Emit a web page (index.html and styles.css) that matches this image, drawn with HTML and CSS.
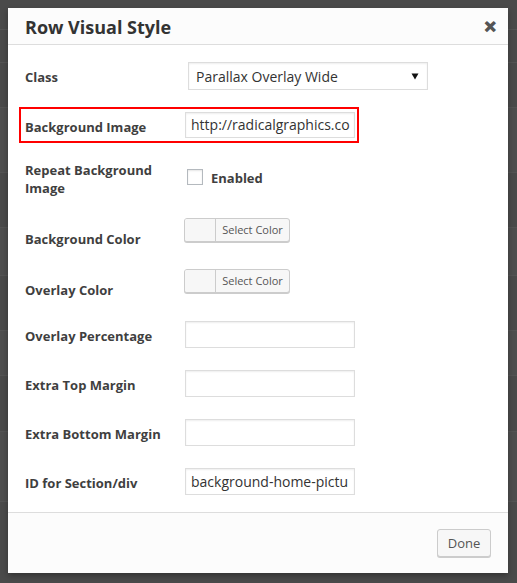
FILE: index.html
```html
<!DOCTYPE html>
<html>
<head>
<meta charset="utf-8">
<title>Row Visual Style</title>
<link rel="stylesheet" href="styles.css">
</head>
<body>
<div class="backdrop">
  <div class="bd-row h30"></div>
  <div class="bd-row h33"></div>
  <div class="bd-row h45"></div>
  <div class="bd-row h65 band"></div>
  <div class="bd-row h55"></div>
  <div class="bd-row h48 band"></div>
  <div class="bd-row h55"></div>
  <div class="bd-row h45 band"></div>
  <div class="bd-row h56"></div>
  <div class="bd-row h70 band"></div>
</div>

<div class="modal">
  <div class="modal-head">
    <h1 class="modal-title">Row Visual Style</h1>
    <span class="close">✕</span>
  </div>
  <div class="modal-body">
    <div class="row row-class">
      <div class="label">Class</div>
      <div class="select">
        <span>Parallax Overlay Wide</span>
        <svg class="caret" width="8" height="7" viewBox="0 0 8 7"><path d="M0.5 0.5h7L4 6.5z" fill="#111"/></svg>
      </div>
    </div>
    <div class="row row-image">
      <div class="label">Background Image</div>
      <div class="input">http://radicalgraphics.co</div>
    </div>
    <div class="row row-repeat">
      <div class="label">Repeat Background<br>Image</div>
      <div class="check-wrap">
        <span class="checkbox"></span>
        <span class="check-label">Enabled</span>
      </div>
    </div>
    <div class="row row-color">
      <div class="label">Background Color</div>
      <div class="color-btn"><span class="swatch"></span><span class="color-text">Select Color</span></div>
    </div>
    <div class="row row-color">
      <div class="label">Overlay Color</div>
      <div class="color-btn"><span class="swatch"></span><span class="color-text">Select Color</span></div>
    </div>
    <div class="row row-text">
      <div class="label">Overlay Percentage</div>
      <div class="input"></div>
    </div>
    <div class="row row-text">
      <div class="label">Extra Top Margin</div>
      <div class="input"></div>
    </div>
    <div class="row row-text">
      <div class="label">Extra Bottom Margin</div>
      <div class="input"></div>
    </div>
    <div class="row row-text">
      <div class="label">ID for Section/div</div>
      <div class="input">background-home-pictu</div>
    </div>
  </div>
  <div class="modal-foot">
    <button class="done">Done</button>
  </div>
</div>
</body>
</html>
```
FILE: styles.css
```css
* { box-sizing: border-box; }
html, body { margin: 0; padding: 0; }
body {
  width: 517px;
  height: 583px;
  overflow: hidden;
  background: #4a4a4a;
  font-family: "Open Sans", "Noto Sans", sans-serif;
  position: relative;
}

.backdrop { display: flex; flex-direction: column; }
.bd-row { border-bottom: 1px solid #545454; }
.bd-row.band { background: #4e4e4e; }
.h30 { height: 30px; }
.h33 { height: 33px; }
.h45 { height: 45px; }
.h48 { height: 48px; }
.h55 { height: 55px; }
.h56 { height: 56px; }
.h65 { height: 65px; }
.h70 { height: 70px; }

.modal {
  position: absolute;
  left: 8px;
  top: 8px;
  width: 500px;
  height: 565px;
  background: #fff;
  display: flex;
  flex-direction: column;
  box-shadow: 0 3px 6px rgba(0,0,0,0.3);
}

.modal-head {
  height: 37px;
  background: #fcfcfc;
  border-bottom: 1px solid #dddddd;
  display: flex;
  align-items: center;
  justify-content: space-between;
  padding: 0 11px 0 17px;
}
.modal-title {
  margin: 0;
  font-size: 18px;
  font-weight: 700;
  color: #333;
  line-height: 24px;
  padding-top: 1px;
}
.close {
  font-size: 15px;
  font-weight: 700;
  color: #555;
  line-height: 15px;
  padding-top: 1px;
  -webkit-text-stroke: 1.2px #555;
}

.modal-body {
  flex: 1;
  padding: 17px 0 0 0;
  display: flex;
  flex-direction: column;
}

.row {
  display: flex;
  align-items: center;
  padding-left: 17px;
}
.label {
  width: 160px;
  flex: none;
  font-size: 13px;
  font-weight: 700;
  color: #3f3f3f;
  line-height: 18px;
}

.row-class { height: 28px; }
.row-class .label { padding-top: 1px; }
.select {
  margin-left: 3px;
  width: 240px;
  height: 28px;
  border: 1px solid #dddddd;
  box-shadow: inset 0 1px 2px rgba(0,0,0,0.07);
  display: flex;
  align-items: center;
  justify-content: space-between;
  padding: 0 8px 0 7px;
  font-size: 14px;
  color: #333;
}
.caret { margin-top: 1px; }

.input {
  width: 170px;
  height: 27px;
  border: 1px solid #dddddd;
  box-shadow: inset 0 1px 2px rgba(0,0,0,0.07);
  background: #fff;
  font-size: 14px;
  color: #333;
  line-height: 25px;
  padding: 0 5px;
  white-space: nowrap;
  overflow: hidden;
}

.row-image {
  margin: 17px 0 0 11px;
  width: 340px;
  border: 2px solid #ff0000;
  padding: 3px 2px 3px 4px;
}
.row-image .input { height: 26px; line-height: 24px; }
.row-image .label { padding-top: 3px; }

.row-repeat {
  margin-top: 18px;
  align-items: flex-start;
}
.check-wrap {
  display: flex;
  align-items: center;
  margin-left: 2px;
  margin-top: 8px;
}
.checkbox {
  width: 16px;
  height: 16px;
  border: 1px solid #b4b9be;
  background: #fff;
  box-shadow: inset 0 1px 2px rgba(0,0,0,0.1);
  margin-top: -3px;
}
.check-label {
  margin-left: 8px;
  font-size: 13px;
  font-weight: 700;
  color: #3f3f3f;
  line-height: 18px;
}

.row-color {
  margin-top: 21px;
  align-items: flex-start;
  height: 30px;
}
.row-color .label { margin-top: 12px; }
.color-btn {
  margin-left: -1px;
  width: 106px;
  height: 24px;
  border: 1px solid #cccccc;
  border-radius: 3px;
  background: #f7f7f7;
  box-shadow: 0 1px 0 #cccccc;
  display: flex;
  overflow: hidden;
}
.swatch {
  width: 31px;
  height: 100%;
  border-right: 1px solid #cccccc;
  background: #f7f7f7;
}
.color-text {
  flex: 1;
  text-align: center;
  font-size: 11px;
  color: #555;
  line-height: 21px;
}

.row-text {
  margin-top: 22px;
  height: 27px;
}
.row-text .label { padding-top: 3px; }

.modal-foot {
  height: 61px;
  border-top: 1px solid #dddddd;
  background: #fcfcfc;
  display: flex;
  justify-content: flex-end;
  align-items: flex-start;
  padding: 16px 17px 0 0;
}
.done {
  width: 54px;
  height: 28px;
  border: 1px solid #cccccc;
  border-radius: 3px;
  background: #f7f7f7;
  box-shadow: 0 1px 0 #cccccc;
  font-family: "Open Sans", "Noto Sans", sans-serif;
  font-size: 13px;
  color: #555;
  padding: 0;
  line-height: 26px;
}
```
